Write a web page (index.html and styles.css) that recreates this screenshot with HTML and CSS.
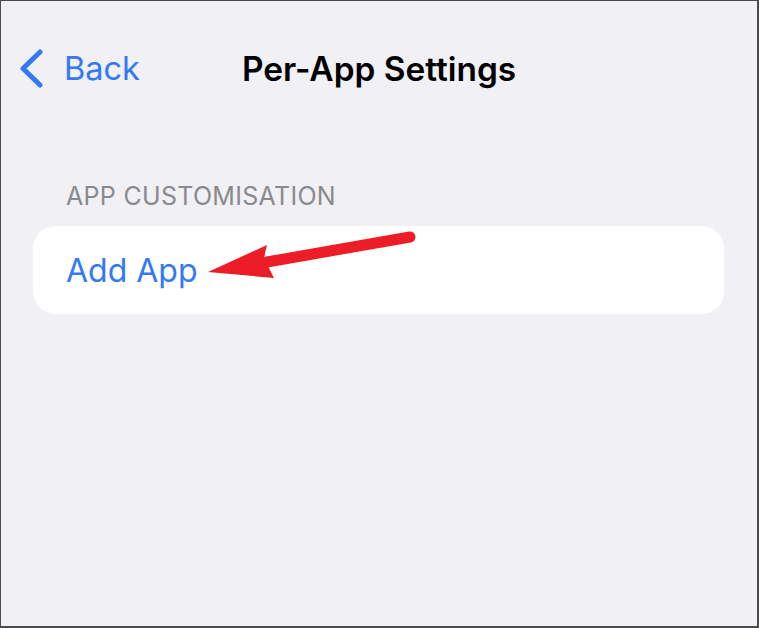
FILE: index.html
```html
<!DOCTYPE html>
<html lang="en">

<head>
    <meta http-equiv="Content-Type" content="text/html; charset=UTF-8" />
    <title>Per-App Settings</title>
    <link rel="stylesheet" href="styles.css">
</head>

<body>
    <div class="screen">
        <div class="navBar">
            <a class="backButton" href="#">
                <svg class="backChevron" width="26" height="40" viewBox="0 0 26 40">
                    <path d="M21 3 L4 19.5 L21 36" fill="none" stroke="#3478f6" stroke-width="5" stroke-linecap="round" stroke-linejoin="round" />
                </svg>
                <span>Back</span>
            </a>
            <div class="navTitle">Per-App Settings</div>
            <div></div>
        </div>

        <div class="sectionHeader">APP CUSTOMISATION</div>
        <div class="groupCard">
            <div class="cellRow">Add App</div>
            <!-- red annotation arrow -->
            <svg class="annotationArrow" width="400" height="70" viewBox="0 0 400 70">
                <line x1="234" y1="36" x2="377" y2="11" stroke="#ec1d27" stroke-width="11" stroke-linecap="round" />
                <polygon points="175,46 234,19 231,32 236,42 241,52" fill="#ec1d27" />
            </svg>
        </div>
    </div>
</body>

</html>
```

FILE: styles.css
```css
html, body {
    margin: 0;
    padding: 0;
}
body {
    background: #4a4a4e;
    font-family: Inter, "Noto Sans", sans-serif;
}

.screen {
    width: 756px;
    height: 625px;
    margin: 1px 2px 2px 1px;
    background: #f1f0f5;
    overflow: hidden;
}

.navBar {
    display: grid;
    grid-template-columns: 1fr auto 1fr;
    align-items: center;
    padding: 46px 0 0 0;
    height: 44px;
}
.backButton {
    display: flex;
    align-items: center;
    gap: 19px;
    padding-left: 18px;
    color: #3478f6;
    text-decoration: none;
    font-size: 32.5px;
    line-height: 44px;
}
.navTitle {
    font-size: 33.4px;
    font-weight: 600;
    line-height: 44px;
    color: #000000;
}

.sectionHeader {
    margin: 90px 0 0 65px;
    font-size: 25px;
    line-height: 30px;
    color: #8a8a8e;
    letter-spacing: 0.3px;
}

.groupCard {
    position: relative;
    margin: 15px 33px 0 32px;
    height: 88px;
    background: #ffffff;
    border-radius: 22px;
    display: flex;
    align-items: center;
}
.cellRow {
    padding-left: 33px;
    font-size: 32px;
    color: #3478f6;
}
.annotationArrow {
    position: absolute;
    left: 0;
    top: 0;
}
```
